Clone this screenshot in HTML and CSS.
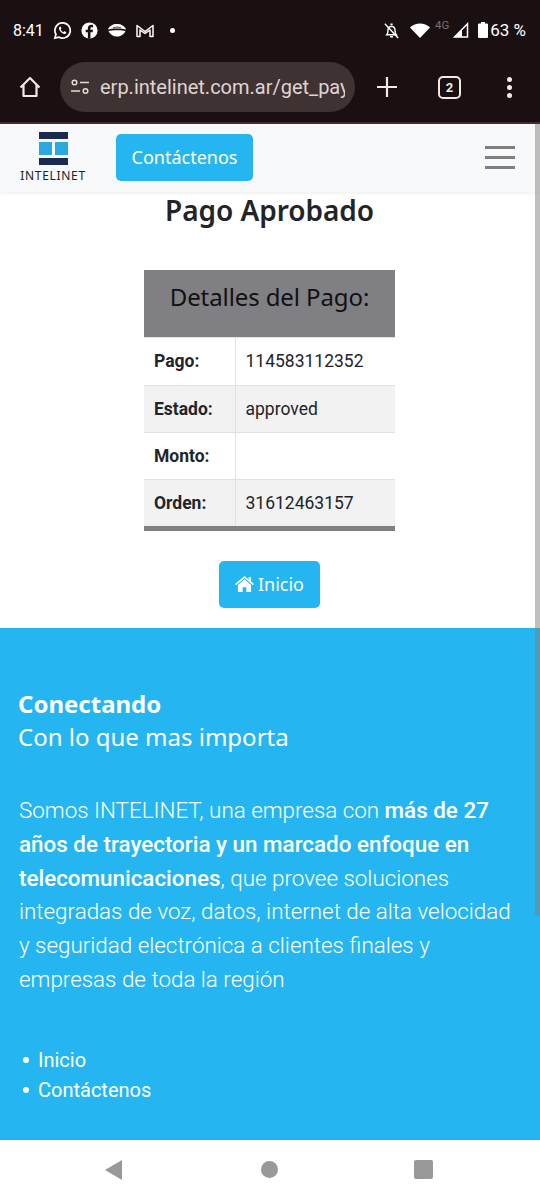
FILE: index.html
```html
<!DOCTYPE html>
<html lang="en">
<head>
  <meta charset="UTF-8">
  <meta name="viewport" content="width=device-width, initial-scale=1.0">
  <title>Pago Aprobado</title>
  <link rel="stylesheet" href="styles.css">
</head>
<body>
  <div class="phone">
    <div class="status-bar">
      <div class="status-left">
        <span class="clock">8:41</span>
        <svg class="st-icon" viewBox="0 0 20 20"><path d="M10 2a8 8 0 0 0-6.9 12L2 18l4.100-1.100A8 8 0 1 0 10 2z" fill="none" stroke="#fff" stroke-width="1.800"/><path d="M7.200 6c-.9.600-1.100 1.700-.6 3 .8 2.100 2.400 3.600 4.500 4.400 1.200.4 2.300.1 2.800-.8.200-.4.100-.7-.2-.9l-1.500-.8c-.3-.1-.5 0-.7.200l-.6.700c-1.300-.5-2.300-1.500-2.900-2.800l.6-.6c.2-.2.2-.5.1-.7L8 6.100C7.800 5.800 7.500 5.800 7.200 6z" fill="#fff"/></svg>
        <svg class="st-icon" viewBox="0 0 20 20"><circle cx="10" cy="10" r="8.500" fill="#fff"/><path d="M11 18.500v-6.700h2.300l.4-2.600H11V7.800c0-.8.300-1.300 1.400-1.300h1.400V4.200c-.5-.1-1.300-.2-2-.2-2.200 0-3.500 1.300-3.500 3.500v1.700H6v2.600h2.300v6.700z" fill="#1a1011"/></svg>
        <svg class="st-icon wide" viewBox="0 0 20 14"><path d="M1 6C2 2.500 6 .5 10 .5S18 2.500 19 6c-3-1.500-15-1.500-18 0z" fill="#fff"/><path d="M1.500 7.500C4 6.500 16 6.500 18.500 7.500 17 11 13.500 13 10 13S3 11 1.500 7.500z" fill="#fff"/><path d="M6 4.500c2-1.200 6-1.200 8 0" fill="none" stroke="#1a1011" stroke-width="0.800"/></svg>
        <svg class="st-icon wide" viewBox="0 0 20 16"><path d="M2 14V3l8 6 8-6v11h-3V7.500L10 11 5 7.500V14z" fill="none" stroke="#fff" stroke-width="1.500" stroke-linejoin="round"/></svg>
        <span class="dot"></span>
      </div>
      <div class="status-right">
        <svg class="st-icon" viewBox="0 0 20 20"><path d="M5 14.500c1-1 1.300-2 1.300-4.500 0-2.500 1.500-4.300 3.700-4.500 2.200.2 3.700 2 3.700 4.500 0 2.500.3 3.500 1.300 4.500z" fill="none" stroke="#fff" stroke-width="1.500"/><path d="M8.500 16.500h3M8.800 3.500h2.400M3 3l14 15" stroke="#fff" stroke-width="1.500"/></svg>
        <svg class="wifi" viewBox="0 0 20 15"><path d="M0 4.500C5.500-1 14.500-1 20 4.500L10 15z" fill="#fff"/></svg>
        <span class="net">4G</span>
        <svg class="signal" viewBox="0 0 16 16"><path d="M14.500 1.800V15H1.500z" fill="none" stroke="#fff" stroke-width="1.500"/><path d="M9 7.500V15H1.500z" fill="#fff"/></svg>
        <svg class="battery" viewBox="0 0 10 16"><path d="M3 0h4v1.500h2a1 1 0 0 1 1 1V15a1 1 0 0 1-1 1H1a1 1 0 0 1-1-1V2.500a1 1 0 0 1 1-1h2z" fill="#fff"/></svg>
        <span class="percent">63 %</span>
      </div>
    </div>

    <div class="toolbar">
      <svg class="tb-home" viewBox="0 0 24 24"><path d="M2.500 12.500 12 3l9.500 9.500M5.500 10v11h13V10" fill="none" stroke="#f3e8e6" stroke-width="2.200" stroke-linejoin="round"/></svg>
      <div class="url-pill">
        <svg class="tune" viewBox="0 0 20 16"><circle cx="4.500" cy="3.500" r="2.300" fill="none" stroke="#e8dcda" stroke-width="1.500"/><path d="M10 3.500h9M1 12h9" stroke="#e8dcda" stroke-width="1.500"/><circle cx="15.500" cy="12" r="2.300" fill="none" stroke="#e8dcda" stroke-width="1.500"/></svg>
        <span class="url">erp.intelinet.com.ar/get_pay</span>
      </div>
      <svg class="tb-plus" viewBox="0 0 20 20"><path d="M10 0v20M0 10h20" stroke="#f3e8e6" stroke-width="2.200"/></svg>
      <span class="tab-count">2</span>
      <span class="tb-more"><i></i><i></i><i></i></span>
    </div>

    <nav class="navbar">
      <div class="brand">
        <svg class="logo" viewBox="0 0 29 33"><rect width="29" height="7" fill="#1b2a4e"/><rect y="26" width="29" height="7" fill="#1b2a4e"/><rect y="10" width="13" height="13" fill="#2ba8e0"/><rect x="16" y="10" width="13" height="13" fill="#2ba8e0"/></svg>
        <span class="brand-name">INTELINET</span>
      </div>
      <a class="btn nav-btn">Contáctenos</a>
      <span class="burger"><i></i><i></i><i></i></span>
    </nav>

    <main class="content">
      <h1>Pago Aprobado</h1>
      <table class="details">
        <thead>
          <tr><th colspan="2">Detalles del Pago:</th></tr>
        </thead>
        <tbody>
          <tr><th>Pago:</th><td>114583112352</td></tr>
          <tr><th>Estado:</th><td>approved</td></tr>
          <tr><th>Monto:</th><td></td></tr>
          <tr><th>Orden:</th><td>31612463157</td></tr>
        </tbody>
      </table>
      <a class="btn home-btn">
        <svg class="home-glyph" viewBox="0 0 20 17"><path d="M10 0 0 8.500l1 1.200L10 2l9 7.700 1-1.200-3-2.600V1h-2.500v2.800z" fill="#fff"/><path d="M10 3.500 3 9.500V17h5v-5h4v5h5V9.500z" fill="#fff"/></svg>
        Inicio
      </a>
    </main>

    <footer class="footer">
      <h2><b>Conectando</b><br>Con lo que mas importa</h2>
      <p>Somos INTELINET, una empresa con <strong>más de 27 años de trayectoria y un marcado enfoque en telecomunicaciones</strong>, que provee soluciones integradas de voz, datos, internet de alta velocidad y seguridad electrónica a clientes finales y empresas de toda la región</p>
      <ul>
        <li>Inicio</li>
        <li>Contáctenos</li>
      </ul>
    </footer>

    <div class="android-nav">
      <span class="nav-back"></span>
      <span class="nav-circle"></span>
      <span class="nav-square"></span>
    </div>

    <div class="scroll-thumb"></div>
  </div>
</body>
</html>
```

FILE: styles.css
```css
* {
  box-sizing: border-box;
}
html, body {
  margin: 0;
  padding: 0;
}
body {
  font-family: Roboto, sans-serif;
  background: #fff;
}
.phone {
  position: relative;
  display: flex;
  flex-direction: column;
  width: 540px;
  height: 1200px;
  overflow: hidden;
}

/* status bar */
.status-bar {
  display: flex;
  align-items: center;
  justify-content: space-between;
  height: 60px;
  padding: 0 14px 0 13px;
  background: #1a1011;
  color: #fff;
}
.status-left, .status-right {
  display: flex;
  align-items: center;
}
.clock {
  font-size: 16px;
  margin-right: 9px;
}
.st-icon {
  width: 19px;
  height: 19px;
  margin-right: 8px;
}
.st-icon.wide {
  width: 20px;
  margin-right: 8px;
}
.dot {
  width: 5px;
  height: 5px;
  margin-left: 7px;
  border-radius: 50%;
  background: #fff;
}
.status-right {
  height: 20px;
}
.status-right .st-icon {
  margin-right: 9px;
}
.wifi {
  width: 20px;
  height: 15px;
}
.net {
  align-self: flex-start;
  margin: -2px 4px 0 5px;
  font-size: 11.500px;
  color: #77706f;
}
.signal {
  width: 16px;
  height: 16px;
  margin-right: 9px;
}
.battery {
  width: 10px;
  height: 16px;
  margin-right: 2px;
}
.percent {
  font-size: 17px;
}

/* browser toolbar */
.toolbar {
  display: flex;
  align-items: center;
  height: 64px;
  padding: 0 0 8px 18px;
  background: #1a1011;
  border-bottom: 2px solid #3d3032;
}
.tb-home {
  flex: none;
  width: 24px;
  height: 24px;
}
.url-pill {
  display: flex;
  align-items: center;
  flex: none;
  width: 295px;
  height: 50px;
  margin-left: 18px;
  padding: 0 10px;
  border-radius: 25px;
  background: #3e3233;
  color: #e0d4d2;
}
.tune {
  flex: none;
  width: 20px;
  height: 16px;
  margin-right: 10px;
}
.url {
  flex: 1;
  min-width: 0;
  font-size: 20px;
  line-height: 30px;
  white-space: nowrap;
  overflow: hidden;
}
.tb-plus {
  flex: none;
  width: 20px;
  height: 20px;
  margin-left: 22px;
}
.tab-count {
  flex: none;
  display: flex;
  align-items: center;
  justify-content: center;
  width: 23px;
  height: 23px;
  margin-left: 41px;
  border: 2px solid #f3e8e6;
  border-radius: 5px;
  color: #f3e8e6;
  font-size: 13px;
  font-weight: 700;
}
.tb-more {
  flex: none;
  display: flex;
  flex-direction: column;
  gap: 3px;
  margin-left: 46px;
}
.tb-more i {
  width: 5px;
  height: 5px;
  border-radius: 50%;
  background: #f3e8e6;
}

/* site navbar */
.navbar {
  display: flex;
  align-items: center;
  position: relative;
  height: 68px;
  padding: 0 25px 2px 20px;
  background: #f8f9fa;
  box-shadow: 0 1px 4px rgba(0, 0, 0, 0.08);
}
.brand {
  display: flex;
  flex-direction: column;
  align-items: center;
  width: 66px;
  margin-top: 2px;
}
.logo {
  width: 29px;
  height: 33px;
}
.brand-name {
  margin-top: 2px;
  font-family: "Noto Sans", sans-serif;
  font-size: 12px;
  letter-spacing: 0.7px;
  color: #222;
}
.btn {
  display: inline-flex;
  align-items: center;
  justify-content: center;
  background: #25b6f1;
  color: #fff;
  border-radius: 5px;
  font-family: "Noto Sans", sans-serif;
}
.nav-btn {
  width: 137px;
  height: 47px;
  margin-left: 30px;
  font-size: 18px;
}
.burger {
  display: flex;
  flex-direction: column;
  gap: 7px;
  margin-left: auto;
}
.burger i {
  width: 30px;
  height: 3px;
  background: #7f7f7f;
}

/* page content */
.content {
  display: flex;
  flex-direction: column;
  align-items: center;
  height: 436px;
  padding-right: 1px;
  background: #fff;
}
h1 {
  margin: 0;
  height: 78px;
  font-family: "Noto Sans", sans-serif;
  font-size: 28px;
  font-weight: 600;
  line-height: 36px;
  letter-spacing: -0.05px;
  color: #212529;
}
.details {
  width: 251px;
  border-collapse: collapse;
  border-bottom: 5px solid #808080;
  font-size: 17.500px;
  color: #212529;
}
.details thead th {
  height: 67px;
  padding-bottom: 15px;
  background: #808084;
  font-family: "Noto Sans", sans-serif;
  font-size: 24px;
  font-weight: 400;
  letter-spacing: -0.1px;
  color: #111;
}
.details tbody th, .details tbody td {
  height: 47px;
  padding: 0 10px;
  text-align: left;
  border-top: 1px solid #dee2e6;
}
.details tbody tr:first-child th {
  height: 48px;
}
.details tbody tr:last-child th {
  height: 49px;
}
.details tbody th {
  width: 91px;
  border-right: 1px solid #dee2e6;
  font-weight: 700;
}
.details tbody tr:nth-child(even) {
  background: #f2f2f2;
}
.home-btn {
  gap: 4px;
  width: 101px;
  height: 47px;
  margin-top: 30px;
  font-size: 18px;
}
.home-glyph {
  width: 19px;
  height: 16px;
}

/* footer */
.footer {
  flex: 1;
  padding: 59px 19px 0;
  background: #25b6f1;
  color: #fff;
}
.footer h2 {
  margin: 0 0 0 -1px;
  font-family: "Noto Sans", sans-serif;
  font-size: 24px;
  font-weight: 400;
  line-height: 33px;
}
.footer p {
  margin: 41px 0 0;
  font-size: 22.400px;
  font-weight: 300;
  line-height: 33.800px;
}
.footer strong {
  font-weight: 500;
}
.footer ul {
  margin: 48px 0 0;
  padding: 0 0 0 4px;
  list-style: none;
  font-size: 20px;
  line-height: 30px;
}
.footer li {
  display: flex;
  align-items: center;
}
.footer li::before {
  content: "";
  width: 6px;
  height: 6px;
  margin-right: 9px;
  border-radius: 50%;
  background: #fff;
}

/* android nav */
.android-nav {
  display: flex;
  align-items: center;
  justify-content: center;
  flex: none;
  height: 60px;
  padding: 0 3px 1px 0;
  background: #fff;
}
.nav-back {
  width: 0;
  height: 0;
  border-top: 10px solid transparent;
  border-bottom: 10px solid transparent;
  border-right: 17px solid #999;
}
.nav-circle {
  width: 17px;
  height: 17px;
  margin-left: 139px;
  border-radius: 50%;
  background: #999;
}
.nav-square {
  width: 19px;
  height: 19px;
  margin-left: 136px;
  border-radius: 2px;
  background: #999;
}

.scroll-thumb {
  position: absolute;
  top: 124px;
  right: 0;
  width: 5px;
  height: 792px;
  background: rgba(128, 128, 128, 0.5);
}
```
